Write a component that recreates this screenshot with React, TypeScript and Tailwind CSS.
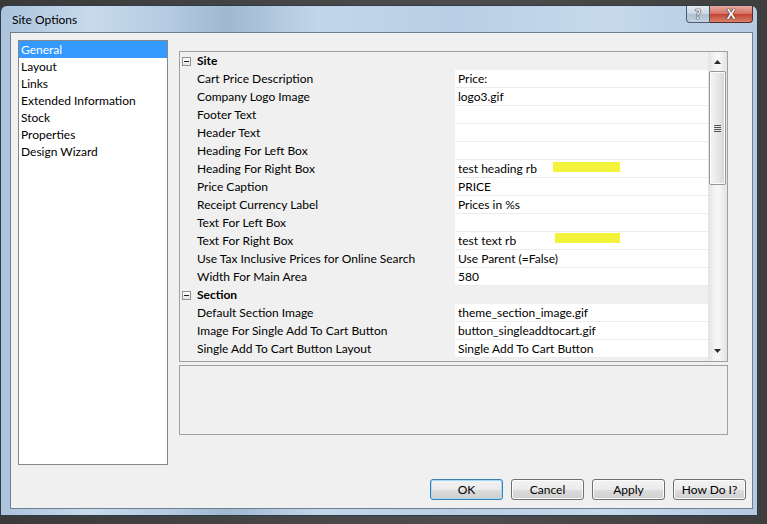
import React from "react";

type Prop = { name: string; value: string; mark?: string };

const site: Prop[] = [
  { name: "Cart Price Description", value: "Price:" },
  { name: "Company Logo Image", value: "logo3.gif" },
  { name: "Footer Text", value: "" },
  { name: "Header Text", value: "" },
  { name: "Heading For Left Box", value: "" },
  { name: "Heading For Right Box", value: "test heading rb", mark: "left-[98px] top-[2px] w-[67px]" },
  { name: "Price Caption", value: "PRICE" },
  { name: "Receipt Currency Label", value: "Prices in %s" },
  { name: "Text For Left Box", value: "" },
  { name: "Text For Right Box", value: "test text rb", mark: "left-[100px] top-[1px] w-[65px]" },
  { name: "Use Tax Inclusive Prices for Online Search", value: "Use Parent (=False)" },
  { name: "Width For Main Area", value: "580" },
];

const section: Prop[] = [
  { name: "Default Section Image", value: "theme_section_image.gif" },
  { name: "Image For Single Add To Cart Button", value: "button_singleaddtocart.gif" },
  { name: "Single Add To Cart Button Layout", value: "Single Add To Cart Button" },
];

const pages = ["General", "Layout", "Links", "Extended Information", "Stock", "Properties", "Design Wizard"];

function Category({ label }: { label: string }) {
  return (
    <div className="flex h-[18px] items-center">
      <div className="flex w-[16px] shrink-0 pl-[2px]">
        <div className="flex h-[9px] w-[9px] items-center justify-center border border-[#929292] bg-[linear-gradient(to_bottom,#ffffff,#e4e4e4)]">
          <div className="h-[1px] w-[5px] bg-[#222]" />
        </div>
      </div>
      <div className="pl-[1px] font-bold">{label}</div>
    </div>
  );
}

function Row({ p }: { p: Prop }) {
  return (
    <div className="flex h-[18px]">
      <div className="w-[16px] shrink-0" />
      <div className="w-[259px] shrink-0 truncate pl-[1px] leading-[18px]">{p.name}</div>
      <div className="relative w-[253px] shrink-0 border-b border-[#ececec] bg-white pl-[3px] leading-[17px]">
        {p.value}
        {p.mark && <span className={`absolute h-[10px] bg-[#f3f33c] ${p.mark}`} />}
      </div>
    </div>
  );
}

function ScrollBar() {
  return (
    <div className="flex w-[19px] shrink-0 flex-col bg-[linear-gradient(to_right,#e3e3e3,#f6f6f6_40%,#f6f6f6_60%,#e3e3e3)] py-[1px] pl-[1px] pr-[1px]">
      <div className="flex h-[18px] items-center justify-center">
        <svg width="7" height="4" viewBox="0 0 7 4">
          <path d="M3.5 0 L7 4 L0 4 Z" fill="#2b2b2b" />
        </svg>
      </div>
      <div className="flex h-[114px] items-center justify-center rounded-[2px] border border-[#979797] bg-[linear-gradient(to_right,#f4f4f4,#e8e8e8_50%,#d4d4d4)] shadow-[inset_0_0_0_1px_#fbfbfb]">
        <div className="flex flex-col gap-[1px]">
          <div className="h-[1px] w-[7px] bg-[#555]" />
          <div className="h-[1px] w-[7px] bg-[#555]" />
          <div className="h-[1px] w-[7px] bg-[#555]" />
          <div className="h-[1px] w-[7px] bg-[#555]" />
        </div>
      </div>
      <div className="flex-1" />
      <div className="flex h-[18px] items-center justify-center">
        <svg width="7" height="4" viewBox="0 0 7 4">
          <path d="M0 0 L7 0 L3.5 4 Z" fill="#2b2b2b" />
        </svg>
      </div>
    </div>
  );
}

function DlgButton({ label, main }: { label: string; main?: boolean }) {
  return (
    <button
      className={`h-[21px] w-[73px] rounded-[3px] border bg-[linear-gradient(to_bottom,#f2f2f2_0%,#ebebeb_50%,#dddddd_50%,#cfcfcf_100%)] text-[12px] text-black ${
        main ? "border-[#3c7fb1] shadow-[inset_0_0_0_1px_#9fdcf8]" : "border-[#707070] shadow-[inset_0_0_0_1px_#fcfcfc]"
      }`}
    >
      {label}
    </button>
  );
}

export default function App() {
  return (
    <div className="h-[524px] w-[767px] overflow-hidden bg-[linear-gradient(to_right,#3a3a3a,#4d4d4d_60%,#3e3e3e)] pt-[5px] font-['Lato','Segoe_UI',sans-serif] text-[12px] text-black">
      <div className="flex h-[511px] w-[758px] flex-col rounded-t-[7px] border border-[#2f3b47] bg-[linear-gradient(90deg,#aac3dc,#c8daec_12%,#b4cbe1_22%,#9fb9d1_30%,#c2d6ea_42%,#b9cfe5_60%,#c6d9ec_80%,#b3cae1)] pb-[6px] pl-[9px] pr-[4px]">
        <div className="flex h-[26px] shrink-0 items-start justify-between">
          <div className="self-center pl-[2px] pt-[1px] text-[12px] text-black">Site Options</div>
          <div className="flex">
            <div className="flex h-[17px] w-[24px] items-center justify-center rounded-bl-[4px] border border-t-0 border-[#4d5b69] bg-[linear-gradient(to_bottom,#e4ecf4,#c9d6e3_50%,#aebfcf_50%,#c4d3e2)] text-[13px] font-bold leading-none text-white [text-shadow:0_0_1px_#222,0_0_1px_#222,0_0_1px_#222]">
              ?
            </div>
            <div className="flex h-[17px] w-[43px] items-center justify-center rounded-br-[4px] border border-l-0 border-t-0 border-[#5a2a24] bg-[linear-gradient(to_bottom,#e9aa9f,#d56f62_50%,#c2402f_50%,#d8826c)] text-[13px] font-bold leading-none text-white [text-shadow:0_0_1px_#222,0_0_1px_#222,0_0_1px_#222]">
              X
            </div>
          </div>
        </div>
        <div className="flex h-[477px] w-[743px] shrink-0 flex-col border border-[#6f7f8f] bg-[#f0f0f0]">
          <div className="flex pl-[7px] pt-[7px]">
            <div className="h-[425px] w-[150px] shrink-0 border border-[#828790] bg-white">
              {pages.map((p, i) => (
                <div
                  key={p}
                  className={`h-[17px] pl-[2px] leading-[17px] ${i === 0 ? "bg-[#3399ff] text-white" : "text-black"}`}
                >
                  {p}
                </div>
              ))}
            </div>
            <div className="ml-[11px] flex flex-col pt-[11px]">
              <div className="flex h-[311px] w-[549px] overflow-hidden border border-[#a0a0a0] bg-[#f0f0f0]">
                <div className="flex w-[528px] flex-col">
                  <Category label="Site" />
                  {site.map((p) => (
                    <Row key={p.name} p={p} />
                  ))}
                  <Category label="Section" />
                  {section.map((p) => (
                    <Row key={p.name} p={p} />
                  ))}
                </div>
                <ScrollBar />
              </div>
              <div className="mt-[3px] h-[70px] w-[549px] border border-[#a0a0a0] bg-[#f0f0f0]" />
            </div>
          </div>
          <div className="mt-[14px] flex justify-end gap-[8px] pr-[6px]">
            <DlgButton label="OK" main />
            <DlgButton label="Cancel" />
            <DlgButton label="Apply" />
            <DlgButton label="How Do I?" />
          </div>
        </div>
      </div>
    </div>
  );
}
